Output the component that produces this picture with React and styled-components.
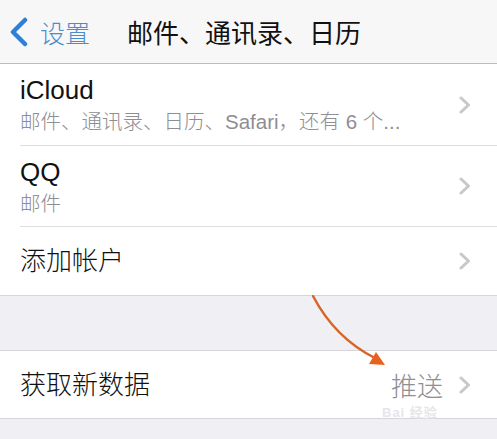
import React from 'react'
import styled, { createGlobalStyle } from 'styled-components'

const Global = createGlobalStyle`
  html, body {
    margin: 0;
    padding: 0;
    background: #efeff4;
  }
  body {
    font-family: "Liberation Sans", "Noto Sans CJK SC", sans-serif;
    color: #111;
  }
`

const Page = styled.div`
  position: relative;
  width: 497px;
  height: 439px;
  overflow: hidden;
  background: #efeff4;
`

const NavBar = styled.div`
  height: 64px;
  display: flex;
  align-items: center;
  background: #f7f7f8;
  border-bottom: 1px solid #bcbcc0;
  box-sizing: border-box;
`

const Back = styled.div`
  display: flex;
  align-items: center;
  gap: 11px;
  padding-left: 9px;
  color: #4a8ccc;
  font-size: 25px;
  font-weight: 300;
  width: 118px;
`

const Title = styled.div`
  font-size: 26px;
  color: #111;
`

const Group = styled.div`
  background: #fff;
  border-top: ${p => (p.$top ? '1px solid #d6d6da' : 'none')};
  border-bottom: 1px solid #d6d6da;
  padding-left: 20px;
  margin-top: ${p => p.$gap || 0}px;
`

const Cell = styled.div`
  height: ${p => p.$h}px;
  display: flex;
  align-items: center;
  padding-right: 26px;
  border-bottom: ${p => (p.$last ? 'none' : '1px solid #dedee2')};
  box-sizing: border-box;
`

const Texts = styled.div`
  flex: 1;
  display: flex;
  flex-direction: column;
`

const Label = styled.div`
  font-size: 26px;
  font-weight: 300;
  line-height: 30px;
  color: #111;
`

const Sub = styled.div`
  font-size: 20.5px;
  font-weight: 300;
  line-height: 24px;
  margin-top: 5px;
  color: #8e8e93;
`

const Value = styled.div`
  font-size: 26px;
  font-weight: 300;
  color: #8e8e93;
  margin-right: 16px;
`

const Watermark = styled.div`
  position: absolute;
  left: 382px;
  top: 402px;
  font-size: 13px;
  font-weight: bold;
  color: #e6e6ea;
  letter-spacing: 1px;
`

const Arrow = styled.svg`
  position: absolute;
  left: 305px;
  top: 290px;
`

const Chevron = () => (
  <svg width='12' height='18' viewBox='0 0 12 18'>
    <path d='M2 2 L9.5 9 L2 16' fill='none' stroke='#c7c7cc' strokeWidth='3' strokeLinecap='round' strokeLinejoin='round' />
  </svg>
)

const BackIcon = () => (
  <svg width='20' height='30' viewBox='0 0 20 30'>
    <path d='M16 3 L4 15 L16 27' fill='none' stroke='#2e7fd6' strokeWidth='4.5' strokeLinecap='round' strokeLinejoin='round' />
  </svg>
)

export default function App () {
  return (
    <Page>
      <Global />
      <NavBar>
        <Back><BackIcon />设置</Back>
        <Title>邮件、通讯录、日历</Title>
      </NavBar>
      <Group>
        <Cell $h={82}>
          <Texts>
            <Label>iCloud</Label>
            <Sub>邮件、通讯录、日历、Safari，还有 6 个...</Sub>
          </Texts>
          <Chevron />
        </Cell>
        <Cell $h={81}>
          <Texts>
            <Label>QQ</Label>
            <Sub>邮件</Sub>
          </Texts>
          <Chevron />
        </Cell>
        <Cell $h={68} $last>
          <Texts>
            <Label>添加帐户</Label>
          </Texts>
          <Chevron />
        </Cell>
      </Group>
      <Group $top $gap={54}>
        <Cell $h={67} $last>
          <Texts>
            <Label>获取新数据</Label>
          </Texts>
          <Value>推送</Value>
          <Chevron />
        </Cell>
      </Group>
      <Watermark>Bai 经验</Watermark>
      <Arrow width='90' height='85' viewBox='0 0 90 85'>
        <path d='M8 6 Q30 48 70 68' fill='none' stroke='#d8642c' strokeWidth='2.5' strokeLinecap='round' />
        <polygon points='80,75 64,74 71,62' fill='#e8621f' />
      </Arrow>
    </Page>
  )
}
